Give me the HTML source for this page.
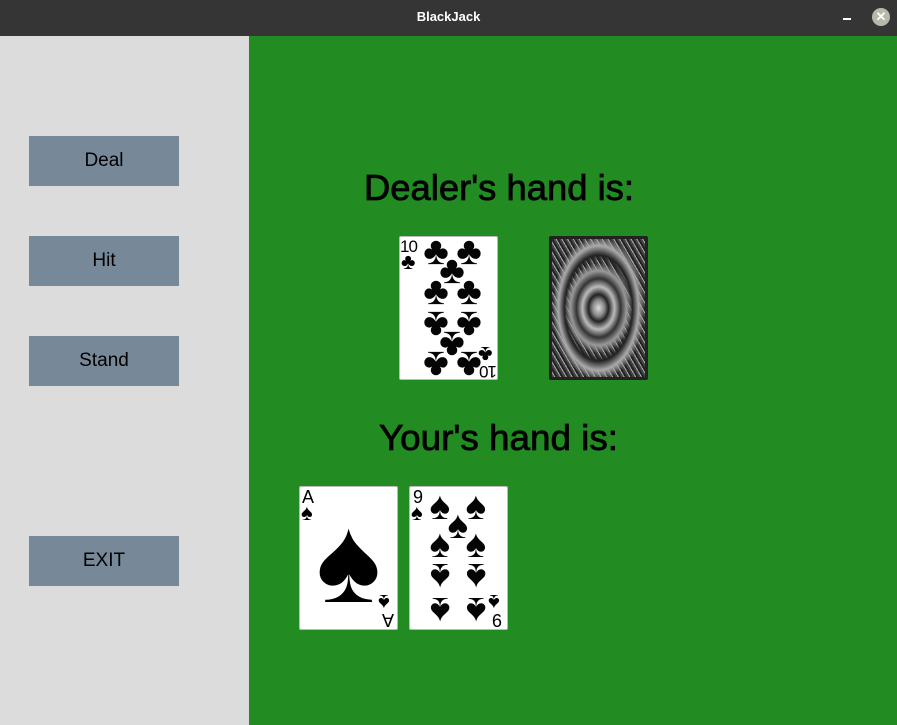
<!DOCTYPE html>
<html><head><meta charset="utf-8"><style>
*{margin:0;padding:0;box-sizing:border-box}
body{width:897px;height:725px;position:relative;overflow:hidden;font-family:"Liberation Sans",sans-serif;background:#228b22}
#tb{position:absolute;left:0;top:0;width:897px;height:36px;background:#353535;color:#fff;font-weight:bold;font-size:13px;text-align:center;line-height:34px}
#left{position:absolute;left:0;top:36px;width:249px;height:689px;background:#dcdcdc}
.btn{position:absolute;left:29px;width:150px;height:50px;background:#778899;color:#000;font-size:19px;text-align:center;line-height:50px}
.card{position:absolute;width:99px;height:144px;background:#fff;border:1px solid #bbb;border-radius:2px;overflow:hidden}
.p{position:absolute;font-size:39px;line-height:40px;width:40px;height:40px;text-align:center;color:#050505;margin-left:-20px;margin-top:-21px}
.r{transform:rotate(180deg)}
.idx{position:absolute;font-size:17px;line-height:17px;color:#000}
.si{position:absolute;font-size:22px;line-height:22px;color:#000}
</style></head><body>
<div id="tb">BlackJack
<div style="position:absolute;left:843px;top:18px;width:8px;height:2px;background:#fff"></div>
<div style="position:absolute;left:872px;top:8px;width:18px;height:18px;border-radius:50%;background:#b8b8aa;color:#fff;font-size:13px;line-height:18px">✕</div>
</div>
<div id="left">
<div class="btn" style="top:100px">Deal</div>
<div class="btn" style="top:200px">Hit</div>
<div class="btn" style="top:300px">Stand</div>
<div class="btn" style="top:500px">EXIT</div>
</div>
<svg style="position:absolute;left:0;top:0" width="897" height="725">
<text x="364" y="200" font-family="Liberation Sans, sans-serif" font-size="36" textLength="270" lengthAdjust="spacingAndGlyphs" fill="#000" stroke="#000" stroke-width="0.8">Dealer's hand is:</text>
<text x="379" y="450" font-family="Liberation Sans, sans-serif" font-size="36" textLength="239" lengthAdjust="spacingAndGlyphs" fill="#000" stroke="#000" stroke-width="0.8">Your's hand is:</text>
</svg>
<!-- 10 of clubs -->
<div class="card" style="left:399px;top:236px">
<div class="idx" style="left:0;top:1px;letter-spacing:-1px">10</div>
<div class="si" style="left:1px;top:14px">♣</div>
<div class="p" style="left:36px;top:16px">♣</div><div class="p" style="left:69px;top:16px">♣</div>
<div class="p" style="left:52px;top:35px">♣</div>
<div class="p" style="left:36px;top:56px">♣</div><div class="p" style="left:69px;top:56px">♣</div>
<div class="p r" style="left:36px;top:88px">♣</div><div class="p r" style="left:69px;top:88px">♣</div>
<div class="p r" style="left:52px;top:108px">♣</div>
<div class="p r" style="left:36px;top:128px">♣</div><div class="p r" style="left:69px;top:128px">♣</div>
<div class="si r" style="left:78px;top:106px">♣</div>
<div class="idx r" style="left:80px;top:126px;letter-spacing:-1px">10</div>
</div>
<!-- back -->
<div class="card" style="left:549px;top:236px;border:3px solid #222;background:radial-gradient(ellipse 30px 40px at 50% 50%,#ddd 0,#888 6px,#222 10px,#bbb 16px,#333 22px,#999 28px,transparent 34px),radial-gradient(ellipse 45px 70px at 50% 50%,transparent 30px,#222 34px,#aaa 40px,transparent 46px),repeating-linear-gradient(60deg,#444 0 2px,#aaa 2px 3px,#222 3px 5px),repeating-linear-gradient(-60deg,#555 0 2px,#ccc 2px 3px,#333 3px 5px)"></div>
<!-- Ace of spades -->
<div class="card" style="left:299px;top:486px">
<div class="idx" style="left:2px;top:2px;font-size:18px">A</div>
<div class="si" style="left:1px;top:15px">♠</div>
<div style="position:absolute;left:0;top:12px;width:97px;font-size:122px;line-height:122px;text-align:center;color:#000">♠</div>
<div class="si r" style="left:78px;top:104px">♠</div>
<div class="idx r" style="left:82px;top:124px;font-size:18px">A</div>
</div>
<!-- 9 of spades -->
<div class="card" style="left:409px;top:486px">
<div class="idx" style="left:3px;top:2px;font-size:18px">9</div>
<div class="si" style="left:1px;top:15px">♠</div>
<div class="p" style="left:30px;top:21px">♠</div><div class="p" style="left:66px;top:21px">♠</div>
<div class="p" style="left:48px;top:40px">♠</div>
<div class="p" style="left:30px;top:59px">♠</div><div class="p" style="left:66px;top:59px">♠</div>
<div class="p r" style="left:30px;top:90px">♠</div><div class="p r" style="left:66px;top:90px">♠</div>
<div class="p r" style="left:30px;top:124px">♠</div><div class="p r" style="left:66px;top:124px">♠</div>
<div class="si r" style="left:78px;top:104px">♠</div>
<div class="idx r" style="left:82px;top:124px;font-size:18px">9</div>
</div>
</body></html>
